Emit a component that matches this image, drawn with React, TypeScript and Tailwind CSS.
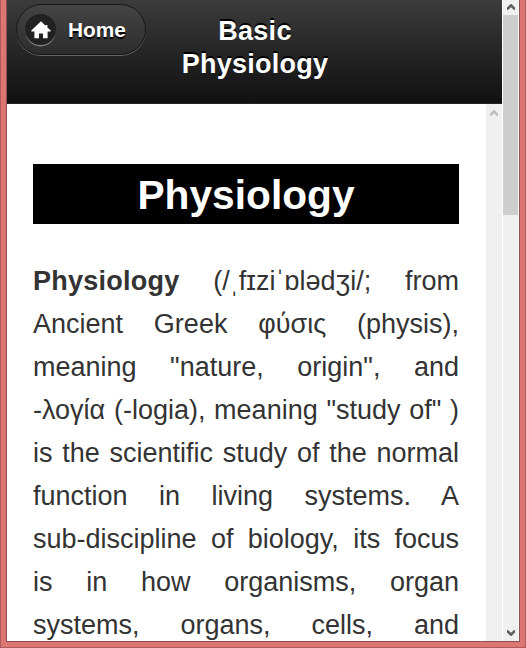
const HomeIcon = () => (
  <svg width="20" height="18" viewBox="0 0 20 18" fill="#fff">
    <path d="M10 0.3L0.3 9.6V10.4H3.4V17.2H8V12.6H12V17.2H16.6V10.4H19.7V9.6L16.4 6.4V4H14.6V4.7Z" />
  </svg>
);

const Arrow = ({ color, down }: { color: string; down?: boolean }) => (
  <svg
    width="8"
    height="6"
    viewBox="0 0 8 6"
    fill={color}
    className={down ? "rotate-180" : ""}
  >
    <path d="M3.5 0H4.5L8 3.4V6H7L4 3.2L1 6H0V3.4Z" />
  </svg>
);

const Header = () => (
  <header className="flex h-[104px] shrink-0 items-start border-b border-[#2a2326] bg-gradient-to-b from-[#3c3c3c] to-[#111]">
    <a
      href="#"
      className="ml-[9px] mt-1 flex h-[51px] w-[130px] shrink-0 items-center rounded-full border border-[#161616] bg-gradient-to-b from-[#444] to-[#2d2d2d] pl-2 text-[20.8px] font-bold text-white shadow-[0_1px_0_rgba(255,255,255,0.3)] [text-shadow:0_2px_1px_#000]"
    >
      <span className="flex h-[31px] w-[31px] items-center justify-center rounded-full bg-[#212121] shadow-[0_2px_0_-0.5px_rgba(255,255,255,0.4)]">
        <HomeIcon />
      </span>
      <span className="ml-3">Home</span>
    </a>
    <h1 className="ml-[27px] mt-[15px] w-[164px] text-center text-[27px] font-bold leading-[33px] tracking-[0.25px] text-white [text-shadow:0_-2px_0_#000]">
      Basic Physiology
    </h1>
  </header>
);

const Article = () => (
  <article className="h-full w-[479px] overflow-hidden pl-[26px] pr-[27px] pt-[60px] text-[#333]">
    <h2 className="h-[60px] bg-black text-center text-[40.7px] font-bold leading-[62px] text-white">
      Physiology
    </h2>
    <p className="mt-9 text-justify text-[27px] leading-[43px] [text-align-last:justify]">
      <b className="tracking-[0.25px]">Physiology</b> (/ˌfɪziˈɒlədʒi/; from Ancient
      Greek φύσις (physis), meaning "nature, origin", and -λογία (-logia), meaning
      "study of" ) is the scientific study of the normal function in living
      systems. A <span className="whitespace-nowrap">sub-discipline</span> of
      biology, its focus <span className="whitespace-nowrap">is in</span> how
      organisms, organ systems, organs, cells, and
    </p>
  </article>
);

const App = () => {
  return (
    <div className="h-[648px] w-[526px] overflow-hidden border-x border-b border-[#ad5a5a] bg-[#dc7673] px-[5px] pb-[5px] font-['Liberation_Sans',Arial,sans-serif]">
      <div className="flex h-full border-x border-b border-[#8a5150] bg-white">
        <main className="flex w-[495px] flex-col">
          <Header />
          <div className="flex min-h-0 grow">
            <Article />
            <div className="flex w-4 justify-center bg-[#f0f0f0] pr-px pt-[6px]">
              <Arrow color="#bfbfbf" />
            </div>
          </div>
        </main>
        <div className="ml-px mr-px flex w-[15px] flex-col items-center bg-[#f0f0f0]">
          <div className="flex h-[15px] shrink-0 items-start pt-1">
            <Arrow color="#606060" />
          </div>
          <div className="h-[200px] w-full shrink-0 bg-[#cdcdcd]" />
          <div className="mt-auto pb-[5px]">
            <Arrow color="#606060" down />
          </div>
        </div>
      </div>
    </div>
  );
};

export default App;
